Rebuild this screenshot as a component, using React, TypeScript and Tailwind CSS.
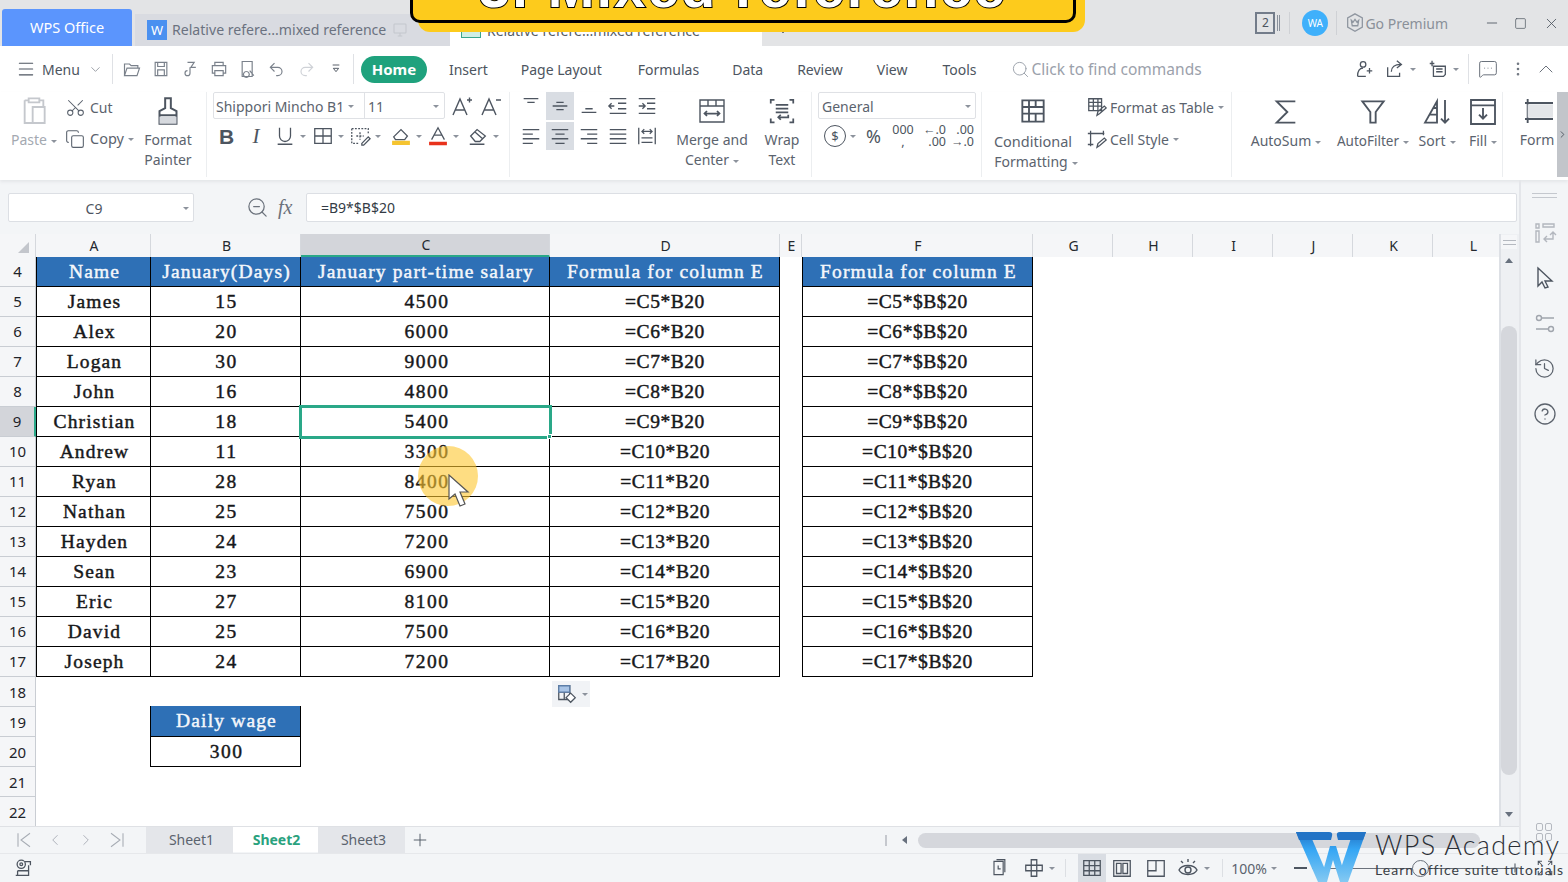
import React from "react";
import { ChevronDown, ChevronUp, Menu as MenuIcon, Search, Scissors, Copy, ZoomOut, Minus, Plus, X, Square, ChevronLeft, ChevronRight, History, CircleHelp, MessageSquareMore, EllipsisVertical } from "lucide-react";

const ui = "font-['Noto_Sans',sans-serif]";
const cols = "grid grid-cols-[36px_115px_150px_249px_230px_22px_231px_80px_80px_80px_80px_80px_80px]";
const serif = "font-['Liberation_Serif',serif] text-[19.5px] [-webkit-text-stroke:0.45px_currentColor]";

const rows = [
  ["James", "15", "4500", "=C5*B20", "=C5*$B$20"],
  ["Alex", "20", "6000", "=C6*B20", "=C6*$B$20"],
  ["Logan", "30", "9000", "=C7*B20", "=C7*$B$20"],
  ["John", "16", "4800", "=C8*B20", "=C8*$B$20"],
  ["Christian", "18", "5400", "=C9*B20", "=C9*$B$20"],
  ["Andrew", "11", "3300", "=C10*B20", "=C10*$B$20"],
  ["Ryan", "28", "8400", "=C11*B20", "=C11*$B$20"],
  ["Nathan", "25", "7500", "=C12*B20", "=C12*$B$20"],
  ["Hayden", "24", "7200", "=C13*B20", "=C13*$B$20"],
  ["Sean", "23", "6900", "=C14*B20", "=C14*$B$20"],
  ["Eric", "27", "8100", "=C15*B20", "=C15*$B$20"],
  ["David", "25", "7500", "=C16*B20", "=C16*$B$20"],
  ["Joseph", "24", "7200", "=C17*B20", "=C17*$B$20"],
];

function Caret() {
  return <span className="inline-block ml-[4px] border-x-[3px] border-t-[3px] border-x-transparent border-t-[#8c929c] align-middle" />;
}

function Ic({ size = 24, className = "", children }: { size?: number; className?: string; children: React.ReactNode }) {
  return (
    <svg width={size} height={size} viewBox="0 0 24 24" fill="none" stroke="currentColor" strokeWidth="1.4" className={"shrink-0 text-[#4d5560] " + className}>
      {children}
    </svg>
  );
}

function Big({ icon, lines, w, dim }: { icon: React.ReactNode; lines: React.ReactNode[]; w: string; dim?: boolean }) {
  return (
    <div className={"flex flex-col items-center shrink-0 text-[14px] leading-[20px] " + w + (dim ? " text-[#a4a9b1]" : " text-[#5b636e]")}>
      <div className="h-[38px] flex items-center justify-center">{icon}</div>
      {lines.map((l, i) => (
        <div key={i} className="whitespace-nowrap">{l}</div>
      ))}
    </div>
  );
}

function TitleBar() {
  return (
    <div className="h-[46px] bg-[#e3e4e6] flex items-end pl-[2px] shrink-0 text-[14px]">
      <div className="w-[130px] h-[37px] bg-[#5b95fd] rounded-t-[3px] text-white flex items-center justify-center text-[14.5px]">WPS Office</div>
      <div className="ml-[3px] w-[315px] h-[32px] bg-[#d9dbe1] flex items-center pl-[12px] text-[#6b7280]">
        <div className="w-[20px] h-[20px] bg-[#4a90f0] text-white text-[13px] leading-[20px] text-center">W</div>
        <span className="ml-[5px] whitespace-nowrap text-[14.1px]">Relative refere...mixed reference</span>
        <Ic size={18} className="ml-[5px] !text-[#c4c7cd]"><rect x="4" y="4" width="16" height="12" rx="1" /><path d="M12 16v4M9 20h6" /></Ic>
      </div>
      <div className="w-[312px] h-[32px] bg-white flex items-center pl-[11px] text-[#555c66]">
        <div className="w-[20px] h-[16px] border border-[#3aa78b] bg-[#cfeee5]" />
        <span className="ml-[6px] whitespace-nowrap text-[14px]">Relative refere...mixed reference</span>
      </div>
      <div className="flex-1 flex items-center h-[46px] text-[#7b828c]">
        <div className="w-[2px] h-[4px] bg-[#6b7280] ml-[20px] mt-[16px]" />
        <div className="ml-auto flex items-center">
          <div className="w-[20px] h-[22px] border-2 border-[#737c8a] text-[#4d5560] text-[12px] leading-[18px] text-center" >2</div>
          <div className="ml-[2px] w-px h-[16px] bg-[#8a919c]" />
          <div className="ml-[1px] w-px h-[16px] bg-[#8a919c] mr-[9px]" />
          <div className="w-px h-[22px] bg-[#cfd1d5]" />
          <div className="ml-[12px] w-[26px] h-[26px] rounded-full bg-[#3fb0fb] text-white text-[10px] leading-[26px] text-center">WA</div>
          <div className="ml-[8px] w-px h-[24px] bg-[#cfd1d5]" />
          <Ic size={22} className="ml-[7px] !text-[#8f96a0]"><path d="M12 2l8 4.5v10L12 21l-8-4.5v-10z" /><path d="M8 9l2 2 2-3 2 3 2-2-1 6H9z" /></Ic>
          <span className="whitespace-nowrap text-[14px] text-[#8a9099] -ml-[1px]">Go Premium</span>
          <Minus size={16} strokeWidth={1.3} className="ml-[36px] text-[#4d5560]" />
          <Square size={13} strokeWidth={1.3} className="ml-[14px] text-[#4d5560]" />
          <X size={17} strokeWidth={1.2} className="ml-[16px] mr-[3px] text-[#4d5560]" />
          <div className="w-[5px]" />
        </div>
      </div>
    </div>
  );
}

function MenuRow() {
  const quick = [
    <path key="a" d="M3 20V6h6l2 2h8v3M3 20l3-9h15l-3 9z" />,
    <path key="b" d="M5 4h14v16H5zM8 4v5h8V4M8 13h8v7H8z" />,
    <path key="c" d="M9 4h8l-4 6h6M12 10v7a3 3 0 1 1-3-3" />,
    <path key="d" d="M7 8V4h10v4M4 8h16v9h-3v-3H7v3H4zM7 14h10v6H7z" />,
    <path key="e" d="M5 3h12v18H5zM10 15a3.5 3.5 0 1 0 .1 0M14 14l5 6" />,
    <path key="f" d="M9 5L4 10l5 5M4 10h9a5 5 0 0 1 0 10h-2" />,
  ];
  return (
    <div className={"h-[46px] bg-white flex items-center pl-[16px] shrink-0 text-[14px] text-[#4d5560] " + ui}>
      <MenuIcon size={20} strokeWidth={1.3} />
      <span className="ml-[6px]">Menu</span>
      <ChevronDown size={15} strokeWidth={1.2} className="ml-[8px] text-[#7d838c]" />
      <div className="w-px h-[30px] bg-[#dfe1e5] ml-[9px] mr-[9px]" />
      <div className="flex gap-[9px] items-center">
        {quick.map((p, i) => (
          <Ic key={i} size={20} className="!text-[#7a818b]">{p}</Ic>
        ))}
        <Ic size={20} className="!text-[#cfd2d7]"><path d="M15 5l5 5-5 5M20 10h-9a5 5 0 0 0 0 10h2" /></Ic>
      </div>
      <Ic size={16} className="ml-[12px]"><path d="M7 6h10M8 11h8l-4 5z" /></Ic>
      <div className="w-px h-[30px] bg-[#dfe1e5] ml-[9px]" />
      <div className="ml-[7px] w-[66px] h-[27px] rounded-full bg-[#1fa27d] text-white font-bold text-[15px] flex items-center justify-center">Home</div>
      <span className="ml-[22px]">Insert</span>
      <span className="ml-[33px]">Page Layout</span>
      <span className="ml-[36px]">Formulas</span>
      <span className="ml-[33px]">Data</span>
      <span className="ml-[34px]">Review</span>
      <span className="ml-[34px]">View</span>
      <span className="ml-[35px]">Tools</span>
      <Search size={19} strokeWidth={1.2} className="ml-[34px] text-[#9ba1ab]" />
      <span className="ml-[2px] pt-[2px] text-[15.5px] text-[#9ba1ab] whitespace-nowrap">Click to find commands</span>
      <div className="ml-auto flex items-center pr-[10px]">
        <Ic size={22}><circle cx="11" cy="7" r="3" /><path d="M5 20c0-7 3-9 6-9M5 20h9M15 14h6M18 11v6" /></Ic>
        <Ic size={22} className="ml-[9px]"><path d="M4 10v10h13v-4M8 15c0-5 4-8 10-8M14 3l5 4-5 4" /></Ic>
        <Caret />
        <Ic size={22} className="ml-[11px]"><path d="M3 6h5M5.500 3v6M7 9h13v9l-2 2H7zM10 12h7M10 15h7" /></Ic>
        <Caret />
        <div className="w-px h-[30px] bg-[#dfe1e5] ml-[9px]" />
        <MessageSquareMore size={20} strokeWidth={1.2} className="ml-[9px] text-[#6b727c]" />
        <EllipsisVertical size={18} strokeWidth={1.5} className="ml-[11px] text-[#6b727c]" />
        <ChevronUp size={24} strokeWidth={1} className="ml-[7px] text-[#6b727c]" />
      </div>
    </div>
  );
}

function Align({ d, on }: { d: string; on?: boolean }) {
  return (
    <div className={"w-[28px] h-[28px] flex items-center justify-center shrink-0 " + (on ? "bg-[#d9dde3]" : "")}>
      <Ic size={22}><path d={d} /></Ic>
    </div>
  );
}

function Ribbon() {
  return (
    <div className={"h-[88px] bg-white flex shrink-0 relative shadow-[0_2px_3px_#e4e6e9] z-10 overflow-hidden " + ui}>
      <div className="w-[207px] h-[85px] border-r border-[#eceef0] flex shrink-0 text-[#5b636e]">
        <Big
          w="w-[65px] pl-[6px] pr-[3px]"
          dim
          icon={<Ic size={32} className="!text-[#c5c8cd]"><path d="M5 4h3M16 4h3v5M5 4v17h6M8 2.500h8v3H8zM11 9h9v12h-9z" /></Ic>}
          lines={[<>Paste<Caret /></>]}
        />
        <div className="w-[74px] text-[14px]">
          <div className="h-[30px] flex items-center">
            <Scissors size={21} strokeWidth={1.2} className="rotate-[-90deg]" />
            <span className="ml-[4px]">Cut</span>
          </div>
          <div className="h-[30px] mt-[2px] flex items-center">
            <Copy size={20} strokeWidth={1.3} />
            <span className="ml-[5px] text-[14.5px]">Copy</span>
            <Caret />
          </div>
        </div>
        <Big
          w="w-[58px]"
          icon={<Ic size={34}><path d="M10 3h4v7l4 2v3H6v-3l4-2zM6 15h12v6H6z" /><path d="M6 16h12v5H6z" fill="#d6d9de" stroke="none" /></Ic>}
          lines={["Format", "Painter"]}
        />
      </div>

      <div className="w-[303px] h-[85px] border-r border-[#eceef0] pl-[6px] shrink-0">
        <div className="h-[27px] flex items-center">
          <div className="w-[232px] h-[27px] border border-[#dfe1e5] rounded-[2px] flex items-center text-[14px] text-[#5b636e]">
            <div className="w-[151px] pl-[2px] pt-[2px] flex items-center whitespace-nowrap border-r border-[#dfe1e5] h-full">Shippori Mincho B1<Caret /></div>
            <div className="flex-1 pl-[3px] pt-[2px] flex items-center justify-between pr-[5px]">11<Caret /></div>
          </div>
          <Ic size={24} className="ml-[5px]"><path d="M3 21L10 5l7 16M5.500 16h9M17 6h5M19.500 3.500v5" /></Ic>
          <Ic size={24} className="ml-[5px]"><path d="M3 21L10 5l7 16M5.500 16h9M17 6h5" /></Ic>
        </div>
        <div className="h-[30px] mt-[2px] flex items-center pl-[6px]">
          <span className="w-[22px] text-[21px] font-bold text-[#4d5560] leading-none font-['Liberation_Sans',sans-serif]">B</span>
          <span className="w-[22px] ml-[4px] text-center text-[21px] italic text-[#4d5560] leading-none font-['Liberation_Serif',serif]">I</span>
          <Ic size={22} className="ml-[7px]"><path d="M6 3v9a6 6 0 0 0 12 0V3M4 21h16" /></Ic><Caret />
          <Ic size={22} className="ml-[6px]"><path d="M3 4h18v16H3zM3 12h18M12 4v16" /></Ic><Caret />
          <Ic size={22} className="ml-[5px]"><path d="M3 4h18v6M3 4v16h8M12 8v8M8 12h8" strokeDasharray="2 1.500" /><path d="M14 20l7-7 2 2-7 7h-2z" /></Ic><Caret />
          <Ic size={22} className="ml-[9px]"><path d="M4 13l8-8 7 7-3 4H6z" /><path d="M3 18h18v3H3z" fill="#f5c431" stroke="#f5c431" /></Ic><Caret />
          <Ic size={22} className="ml-[5px]"><path d="M5 16l7-13 7 13M8 11h8" /><path d="M3 19h18v2.500H3z" fill="#e8321c" stroke="#e8321c" /></Ic><Caret />
          <Ic size={22} className="ml-[8px]"><path d="M4 12l7-7 9 7-6 6H9zM9 8l8 7M3 21h16" /></Ic><Caret />
        </div>
      </div>

      <div className="w-[302px] h-[85px] border-r border-[#eceef0] pl-[8px] flex shrink-0">
        <div className="w-[150px] shrink-0">
          <div className="flex items-center -ml-[1px] gap-px">
            <Align d="M4 4h16M8 8h8" />
            <Align on d="M4 12h16M8 8h8M8 16h8" />
            <Align d="M8 15h8M4 19h16" />
            <Align d="M3 4h18M3 20h18M12 9h9M12 15h9M8 12H3M5 9l-3 3 3 3" />
            <Align d="M3 4h18M3 20h18M12 9h9M12 15h9M3 12h6M7 9l3 3-3 3" />
          </div>
          <div className="flex items-center -ml-[1px] gap-px mt-[2px]">
            <Align d="M3 5h18M3 10h11M3 15h18M3 20h11" />
            <Align on d="M3 5h18M7 10h10M3 15h18M7 20h10" />
            <Align d="M3 5h18M10 10h11M3 15h18M10 20h11" />
            <Align d="M3 5h18M3 10h18M3 15h18M3 20h18" />
            <Align d="M3 3v18M21 3v18M7 7h10M9 4.500L6.500 7 9 9.500M15 4.500L17.500 7 15 9.500M6 14h12M6 19h12" />
          </div>
        </div>
        <Big
          w="w-[80px] ml-[4px]"
          icon={<Ic size={30}><path d="M3 4h24v22H3zM3 10h24M11 4v6M19 4v6" transform="scale(.8)" /><path d="M6 14h12M8 12l-2 2 2 2M16 12l2 2-2 2" /></Ic>}
          lines={["Merge and", <>Center<Caret /></>]}
        />
        <Big
          w="w-[54px] ml-[3px]"
          icon={<Ic size={30}><path d="M6 3H3v3M18 3h3v3M3 18v3h3M21 18v3h-3M7 7h10M7 10h10M7 13h10M17 15v2H9M11 15l-2 2 2 2" /></Ic>}
          lines={["Wrap", "Text"]}
        />
      </div>

      <div className="w-[170px] h-[85px] border-r border-[#eceef0] pl-[6px] shrink-0">
        <div className="w-[158px] h-[27px] border border-[#dfe1e5] rounded-[2px] pl-[3px] pr-[4px] pt-[1px] flex items-center justify-between text-[14px] text-[#5b636e]">General<Caret /></div>
        <div className="h-[30px] mt-[2px] flex items-center pl-[6px] text-[#4d5560]">
          <div className="w-[22px] h-[22px] rounded-full border border-[#4d5560] text-[13px] leading-[20px] text-center">$</div>
          <Caret />
          <span className="ml-[10px] w-[18px] text-[18px] leading-none">%</span>
          <span className="ml-[6px] w-[26px] text-[12.5px] leading-[12px] text-center">000<br />,</span>
          <span className="w-[30px] text-[12.5px] leading-[12px] text-right whitespace-nowrap">←.0<br />.00</span>
          <span className="w-[28px] text-[12.5px] leading-[12px] text-right whitespace-nowrap">.00<br />→.0</span>
        </div>
      </div>

      <div className="w-[250px] h-[85px] border-r border-[#eceef0] flex shrink-0">
        <Big
          w="w-[100px] ml-[1px]"
          icon={<Ic size={32}><path d="M4 4h16v16H4zM4 9h16M4 14h16M9 4v16M14 4v5M14 14v6" /></Ic>}
          lines={[<span key="a" className="text-[14.5px] leading-[20px] inline-block mt-[1px]">Conditional</span>, <span key="b" className="inline-block ml-[6px]">Formatting<Caret /></span>]}
        />
        <div className="ml-[3px] text-[14px] text-[#5b636e]">
          <div className="h-[30px] flex items-center">
            <Ic size={22}><path d="M3 3h14v13H3zM3 7h14M3 11h14M8 3v13M13 3v13M12 21l1-4 7-6 2 2-7 6z" /></Ic>
            <span className="ml-[2px] pt-[1px] whitespace-nowrap">Format as Table</span>
            <Caret />
          </div>
          <div className="h-[30px] mt-[2px] flex items-center">
            <Ic size={22}><path d="M5 3v17M2 6h18M19 3v5M2 18h6M12 21l1-4 7-6 2 2-7 6z" /></Ic>
            <span className="ml-[2px] whitespace-nowrap">Cell Style</span>
            <Caret />
          </div>
        </div>
      </div>

      <div className="w-[271px] h-[85px] border-r border-[#eceef0] flex pl-[21px] pt-[1px] shrink-0">
        <Big w="w-[66px]" icon={<Ic size={32}><path d="M19 4H5l8 8-8 8h14" /></Ic>} lines={[<>AutoSum<Caret /></>]} />
        <Big w="w-[76px] ml-[16px]" icon={<Ic size={32}><path d="M4 4h16l-6 8v8h-4v-8z" /></Ic>} lines={[<span key="f" className="text-[13.5px]">AutoFilter<Caret /></span>]} />
        <Big w="w-[38px] ml-[7px]" icon={<Ic size={32}><path d="M3 20L12 4v16zM6 14h6M9 9h3M18 3v17M15 17l3 3 3-3" /></Ic>} lines={[<>Sort<Caret /></>]} />
        <Big w="w-[32px] ml-[11px]" icon={<Ic size={32}><path d="M3 3h18v18H3zM3 7h18M12 9v8M9 14l3 3 3-3" /></Ic>} lines={[<>Fill<Caret /></>]} />
      </div>

      <Big
        w="w-[36px] ml-[16px]"
        icon={<Ic size={32}><path d="M3 6h21M3 18h21M5 3v18" /><path d="M5 7h19v10H5z" fill="#e3e5e8" stroke="none" /></Ic>}
        lines={["Form"]}
      />
      <div className="absolute right-0 top-0 w-[11px] h-[85px] bg-[#c2c5ca] flex items-center justify-center">
        <ChevronRight size={11} className="text-[#4d5560]" />
      </div>
    </div>
  );
}

function FormulaBar() {
  return (
    <div className={"h-[54px] flex items-center pl-[8px] pr-[2px] shrink-0 " + ui}>
      <div className="w-[186px] h-[29px] bg-white border border-[#dcdfe4] rounded-[2px] flex items-center text-[14px] text-[#4d5560] pr-[4px] pt-[2px]">
        <span className="flex-1 text-center">C9</span>
        <Caret />
      </div>
      <ZoomOut size={23} strokeWidth={1.3} className="ml-[52px] text-[#6b727c]" />
      <span className="ml-[9px] w-[19px] text-[20px] italic text-[#6b727c] font-['Liberation_Serif',serif]">fx</span>
      <div className="ml-[9px] flex-1 h-[29px] bg-white border border-[#dcdfe4] rounded-[2px] flex items-center pl-[14px] pt-[1px] text-[14px] text-[#333b45]">=B9*$B$20</div>
    </div>
  );
}

function RowHead({ n, h = "h-[30px]" }: { n: number; h?: string }) {
  const sel = n === 9;
  return (
    <div className={"flex items-center justify-center text-[15px] text-[#1e2329] border-b border-[#c9cdd3] " + h + (n >= 18 ? " pt-[2px]" : "") + (sel ? " bg-[#d3d5da] border-r-2 border-r-[#2aa888]" : " bg-[#f5f6f8] border-r border-r-[#c9cdd3]")}>{n}</div>
  );
}

function Sheet() {
  const heads = ["A", "B", "C", "D", "E", "F", "G", "H", "I", "J", "K", "L"];
  const cell = "flex items-center justify-center border-r border-b border-black text-[#17181a] whitespace-nowrap " + serif;
  const head = "flex items-center justify-center border-r border-b border-black bg-[#2e70b6] text-[#f4f7fb] whitespace-nowrap tracking-[1.15px] pl-[2px] " + serif;
  return (
    <div className="flex-1 min-w-0 min-h-0 relative overflow-hidden bg-white">
      <div className={cols + " h-[23px] bg-[#f5f6f8] " + ui}>
        <div className="border-r border-[#d5d8dd] flex items-end justify-end pr-[6px] pb-[4px]">
          <div className="w-0 h-0 border-l-[11px] border-b-[11px] border-l-transparent border-b-[#c3c6cc]" />
        </div>
        {heads.map((c) => (
          <div key={c} className={"flex items-center justify-center text-[14px] leading-[20px] pt-[1px] pl-[2px] text-[#24292f] border-r border-[#d5d8dd] " + (c === "C" ? "bg-[#d3d5da] border-b-2 border-b-[#2aa888]" : "")}>{c}</div>
        ))}
      </div>

      <div className={cols + " h-[30px]"}>
        <RowHead n={4} />
        <div className={head + " border-l"}>Name</div>
        <div className={head}>January(Days)</div>
        <div className={head}>January part-time salary</div>
        <div className={head}>Formula for column E</div>
        <div />
        <div className={head + " border-l"}>Formula for column E</div>
      </div>

      {rows.map((r, i) => (
        <div key={i} className={cols + " h-[30px]"}>
          <RowHead n={i + 5} />
          <div className={cell + " border-l tracking-[1.15px] pl-[2px]"}>{r[0]}</div>
          <div className={cell + " tracking-[1.5px] pl-[2px]"}>{r[1]}</div>
          <div className={cell + " tracking-[1.5px] pl-[4px]" + (i === 4 ? " relative outline-[3px] outline-[#2aa888] -outline-offset-1 z-10" : "")}>
            {r[2]}
            {i === 4 && <span className="absolute -right-[3px] -bottom-[3px] w-[5px] h-[5px] bg-[#2aa888] border border-white" />}
          </div>
          <div className={cell + " tracking-[0.55px] pl-[1px]"}>{r[3]}</div>
          <div />
          <div className={cell + " border-l tracking-[0.55px]"}>{r[4]}</div>
        </div>
      ))}

      <div className={cols + " h-[30px]"}><RowHead n={18} /></div>
      <div className={cols + " h-[30px]"}>
        <RowHead n={19} />
        <div />
        <div className={head + " border-l -mt-px -ml-px"}>Daily wage</div>
      </div>
      <div className={cols + " h-[30px]"}>
        <RowHead n={20} />
        <div />
        <div className={cell + " border-l -ml-px tracking-[1.5px] pl-[2px]"}>300</div>
      </div>
      <div className={cols + " h-[30px]"}><RowHead n={21} /></div>
      <div className={cols + " h-[30px]"}><RowHead n={22} /></div>

      <div className="absolute left-[552px] top-[447px] w-[38px] h-[26px] bg-[#f1f3f6] flex items-center pl-[4px]">
        <Ic size={22}><path d="M3 3h12v15H3zM3 10h12M9 3v15" /><path d="M3 3h12v7H3z" fill="#a9c4e6" stroke="#5d7ea8" /><path d="M16 11l5 5-5 5-5-5z" fill="#fff" /></Ic>
        <Caret />
      </div>

      <div className="absolute left-[418px] top-[212px] w-[60px] h-[60px] rounded-full bg-[#fdc62e]/60" />
      <svg width="22" height="36" viewBox="0 0 22 36" className="absolute left-[448px] top-[240px]">
        <path d="M1 1v24l6-5 5 12 5-2-5-12h8z" fill="#fff" stroke="#555" strokeWidth="1.200" />
      </svg>
    </div>
  );
}

function VScroll() {
  return (
    <div className="w-[20px] h-full bg-[#eef0f3] flex flex-col items-center shrink-0 border-l-2 border-[#dde0e5] pr-[2px]">
      <div className="h-[14px] w-full bg-[#f5f6f8] mt-[1px] flex flex-col items-center justify-center gap-[3px]">
        <div className="w-[13px] h-px bg-[#b5b9c0]" />
        <div className="w-[13px] h-px bg-[#b5b9c0]" />
      </div>
      <div className="mt-[9px] w-0 h-0 border-x-[4px] border-b-[5px] border-x-transparent border-b-[#68717e]" />
      <div className="mt-[63px] w-[16px] h-[449px] rounded-full bg-[#d5d7dc]" />
      <div className="mt-[37px] w-0 h-0 border-x-[4px] border-t-[5px] border-x-transparent border-t-[#68717e]" />
    </div>
  );
}

function SideRail() {
  return (
    <div className="w-[49px] bg-[#f3f5f7] border-l-2 border-[#e4e6ea] flex flex-col items-center shrink-0 relative">
      <div className="mt-[13px] w-[25px] flex flex-col gap-[3px]">
        <div className="h-px bg-[#c4c8ce]" />
        <div className="h-px bg-[#c4c8ce]" />
      </div>
      <Ic size={24} className="mt-[23px] !text-[#b3b7be]"><path d="M3 3h3v4H3zM10 3h11v3H10zM3 10h3v11H3zM11 18h9v-6M17 14l3-3 3 3M14 15l-3 3 3 3" /></Ic>
      <Ic size={24} className="mt-[20px]"><path d="M5 3l14 13h-7l3 6-3 1-3-6-4 4z" /></Ic>
      <Ic size={24} className="mt-[22px] !text-[#a0a5ad]"><circle cx="6" cy="7" r="2.500" /><path d="M9 7h12M3 18h12" /><circle cx="18" cy="18" r="2.500" /></Ic>
      <History size={23} strokeWidth={1.3} className="mt-[22px] text-[#5c636d]" />
      <CircleHelp size={24} strokeWidth={1.3} className="mt-[22px] text-[#5c636d]" />
      <div className="absolute left-[15px] bottom-[12px] grid grid-cols-2 gap-[2px]">
        {[0, 1, 2, 3].map((i) => (
          <div key={i} className="w-[7px] h-[8px] rounded-[2px] border border-[#b5b9c0]" />
        ))}
      </div>
    </div>
  );
}

function Tabs() {
  return (
    <div className={"h-[27px] bg-[#f3f5f7] border-t border-[#dfe1e5] flex items-stretch shrink-0 text-[14px] " + ui}>
      <div className="w-[146px] flex items-center pl-[15px] gap-[13px] text-[#a7acb4]">
        <Ic size={18} className="!text-[#a7acb4]"><path d="M4 3v18M20 3L8 12l12 9" /></Ic>
        <ChevronLeft size={18} strokeWidth={1.2} />
        <ChevronRight size={18} strokeWidth={1.2} />
        <Ic size={18} className="!text-[#a7acb4]"><path d="M20 3v18M4 3l12 9-12 9" /></Ic>
      </div>
      <div className="w-[87px] bg-[#e4e6ea] text-[#5b636e] flex items-center justify-center pb-[2px] pl-[4px]">Sheet1</div>
      <div className="w-[85px] bg-white text-[#2aa27e] font-bold flex items-center justify-center mb-[1px] pb-[1px] pl-[2px]">Sheet2</div>
      <div className="w-[87px] bg-[#e4e6ea] text-[#5b636e] flex items-center justify-center pb-[2px] pl-[4px]">Sheet3</div>
      <Plus size={20} strokeWidth={1.1} className="ml-[5px] self-center text-[#4d5560]" />
      <div className="ml-[455px] flex items-center">
        <div className="w-[2px] h-[11px] border-x border-[#c5c8ce]" />
        <div className="ml-[15px] w-0 h-0 border-y-[4px] border-r-[5px] border-y-transparent border-r-[#68717e]" />
      </div>
      <div className="ml-[11px] w-[562px] h-[15px] my-auto rounded-full bg-[#d5d7dc]" />
    </div>
  );
}

function Status() {
  return (
    <div className={"h-[29px] bg-[#f3f5f7] border-t border-[#e6e8eb] flex items-center shrink-0 pl-[13px] text-[14px] text-[#5b636e] " + ui}>
      <Ic size={22}><circle cx="9" cy="8" r="4.500" /><circle cx="9" cy="8" r="1.500" /><path d="M13 5h6v4M5 15h12v-6M5 15v5h12v-5M3 20h14" /></Ic>
      <div className="ml-auto flex items-center h-full">
        <Ic size={20}><path d="M6 4h11v16H6zM11 9v4h3M9 2h10v15" /></Ic>
        <Ic size={22} className="ml-[14px]"><path d="M9 3h6v6h6v6h-6v6H9v-6H3V9h6zM9 9h6v6H9z" /></Ic>
        <Caret />
        <div className="ml-[10px] w-px h-[18px] bg-[#dcdfe3]" />
        <div className="ml-[12px] w-[28px] h-[29px] bg-[#d9dde3] flex items-center justify-center">
          <Ic size={22}><path d="M3 4h18v16H3zM3 9.500h18M3 15h18M9 4v16M15 4v16" /></Ic>
        </div>
        <Ic size={22} className="ml-[5px] mr-[1px]"><path d="M3 4h18v17H3zM6 7h5v11H6zM13 7h5v11h-5z" /></Ic>
        <Ic size={22} className="ml-[11px]"><path d="M3 4h18v17H3zM3 15h9V4M12 15V4" /></Ic>
        <Ic size={24} className="ml-[9px]"><path d="M3 14c3-6 15-6 18 0-3 6-15 6-18 0z" /><circle cx="12" cy="14" r="3" /><path d="M12 3v3M5 5l2 2M19 5l-2 2" /></Ic>
        <Caret />
        <div className="ml-[12px] w-px h-[18px] bg-[#dcdfe3]" />
        <span className="ml-[8px] whitespace-nowrap">100%</span>
        <Caret />
        <div className="ml-[17px] w-[13px] h-[2px] bg-[#4d5560]" />
        <div className="ml-[5px] w-[202px] h-px bg-[#6b727c] relative">
          <span className="absolute left-[100px] -top-[8px] w-[17px] h-[17px] rounded-full border border-[#6b727c] bg-[#f3f5f7]" />
        </div>
        <Plus size={14} strokeWidth={2} className="ml-[-6px]" />
        <Ic size={18} className="ml-[14px] mr-[14px]"><path d="M3 8V3h5M16 3h5v5M3 16v5h5M21 16v5h-5M3 3l5 5M21 3l-5 5M3 21l5-5M21 21l-5-5" /></Ic>
      </div>
    </div>
  );
}

export default function App() {
  return (
    <div className={"w-[1568px] h-[882px] overflow-hidden flex flex-col relative bg-[#f3f5f7] " + ui}>
      <TitleBar />
      <MenuRow />
      <Ribbon />
      <div className="flex-1 min-h-0 flex">
        <div className="flex-1 min-w-0 flex flex-col">
          <FormulaBar />
          <div className="flex-1 min-h-0 flex">
            <Sheet />
            <VScroll />
          </div>
          <Tabs />
        </div>
        <SideRail />
      </div>
      <Status />

      {/* banner over the top of the window */}
      <div className="absolute left-[418px] -top-[40px] w-[667px] h-[72px] bg-[#fdcb1c] rounded-b-[12px]">
        <div className="absolute -left-[8px] top-0 w-[666px] h-[63px] bg-[#fdcb1c] border-[3px] border-black rounded-b-[10px] flex items-end justify-center overflow-hidden">
          <span className="text-[56px] leading-[56px] mb-[4px] font-bold text-white tracking-[2.2px] whitespace-nowrap font-['Liberation_Sans',sans-serif] [-webkit-text-stroke:2px_black] [paint-order:stroke_fill]">3. Mixed reference</span>
        </div>
      </div>

      {/* WPS Academy watermark */}
      <div className="absolute left-[1296px] top-[832px] flex">
        <svg width="70" height="50" viewBox="0 0 70 50">
          <defs>
            <linearGradient id="wg" gradientUnits="userSpaceOnUse" x1="0" y1="0" x2="0" y2="50">
              <stop offset="0" stopColor="#2374c6" />
              <stop offset="0.35" stopColor="#35a6f4" />
              <stop offset="1" stopColor="#84c9f2" />
            </linearGradient>
          </defs>
          <path d="M0 0H13L31 42L27 50H22Z" fill="url(#wg)" />
          <path d="M0 0H33Q37 0 36 4L35 8H3Z" fill="#2374c6" />
          <path d="M24 50H31L37 28L44 50H51L40 14H34Z" fill="url(#wg)" />
          <path d="M70 0H57L43 42L47 50H52Z" fill="url(#wg)" />
          <path d="M70 0H44Q40 0 41 4L42 8H67Z" fill="#2374c6" />
        </svg>
        <div className="ml-[9px] -mt-[1px]">
          <div className="text-[27px] leading-[28px] text-[#2b2f36] font-['Lato',sans-serif] font-light tracking-[1.3px] whitespace-nowrap">WPS Academy</div>
          <div className="text-[14px] leading-[16px] mt-[3px] text-[#3a3f46] font-['Lato',sans-serif] tracking-[1.05px] whitespace-nowrap">Learn office suite tutorials</div>
        </div>
      </div>
    </div>
  );
}
